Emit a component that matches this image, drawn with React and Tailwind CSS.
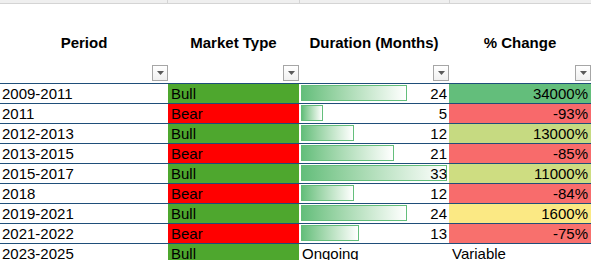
import React from "react";

const rows = [
  { p: "2009-2011", t: "Bull", d: 24, c: "34000%", cc: "bg-[#63be7b]" },
  { p: "2011", t: "Bear", d: 5, c: "-93%", cc: "bg-[#f8696b]" },
  { p: "2012-2013", t: "Bull", d: 12, c: "13000%", cc: "bg-[#c6da81]" },
  { p: "2013-2015", t: "Bear", d: 21, c: "-85%", cc: "bg-[#f86b6b]" },
  { p: "2015-2017", t: "Bull", d: 33, c: "11000%", cc: "bg-[#cedd81]" },
  { p: "2018", t: "Bear", d: 12, c: "-84%", cc: "bg-[#f86c6c]" },
  { p: "2019-2021", t: "Bull", d: 24, c: "1600%", cc: "bg-[#fbe984]" },
  { p: "2021-2022", t: "Bear", d: 13, c: "-75%", cc: "bg-[#f8706d]" },
];

function Filter() {
  return (
    <div className="absolute right-0 bottom-[2px] w-4 h-4 border border-[#a6a6a6] bg-gradient-to-b from-white to-[#f0f0f0] flex items-center justify-center">
      <svg width="7" height="4" viewBox="0 0 7 4">
        <path d="M0 0 L7 0 L3.5 4 Z" fill="#5a5a5a" />
      </svg>
    </div>
  );
}

function Head({ label }) {
  return (
    <div className="relative flex items-center justify-center font-bold">
      {label}
      <Filter />
    </div>
  );
}

export default function App() {
  return (
    <div
      className="w-[591px] h-[260px] overflow-hidden bg-white text-black text-[15px]"
      style={{ fontFamily: '"Liberation Sans", Arial, sans-serif' }}
    >
      <div className="h-[4px] bg-[#efefef] border-b border-[#d4d4d4] grid grid-cols-[167px_1px_131px_1px_149px_1px_142px]">
        <div />
        <div className="bg-[#d4d4d4]" />
        <div />
        <div className="bg-[#d4d4d4]" />
        <div />
        <div className="bg-[#d4d4d4]" />
        <div />
      </div>
      <div className="h-[80px] grid grid-cols-[168px_131px_150px_142px] border-b border-[#1f4e79]">
        <Head label="Period" />
        <Head label="Market Type" />
        <Head label="Duration (Months)" />
        <Head label="% Change" />
      </div>
      {rows.map((r, i) => (
        <div
          key={i}
          className="h-[20px] grid grid-cols-[168px_131px_150px_142px] border-b border-[#1f4e79] leading-[19px]"
        >
          <div className="pl-[2px]">{r.p}</div>
          <div className={`pl-[3px] ${r.t === "Bull" ? "bg-[#4ea72e]" : "bg-[#ff0000]"}`}>{r.t}</div>
          <div className="grid">
            <div className="[grid-area:1/1] pl-[2px] pt-[1px]">
              <div
                className="h-[16px] border border-[#63be7b] bg-gradient-to-r from-[#63be7b] to-[#ffffff]"
                style={{ width: `${Math.round(r.d * 4.43)}px` }}
              />
            </div>
            <div className="[grid-area:1/1] text-right pr-[2px]">{r.d}</div>
          </div>
          <div className={`text-right pr-[3px] ${r.cc}`}>{r.c}</div>
        </div>
      ))}
      <div className="h-[20px] grid grid-cols-[168px_131px_150px_142px] leading-[19px]">
        <div className="pl-[2px]">2023-2025</div>
        <div className="pl-[3px] bg-[#4ea72e]">Bull</div>
        <div className="pl-[3px]">Ongoing</div>
        <div className="pl-[3px]">Variable</div>
      </div>
    </div>
  );
}
